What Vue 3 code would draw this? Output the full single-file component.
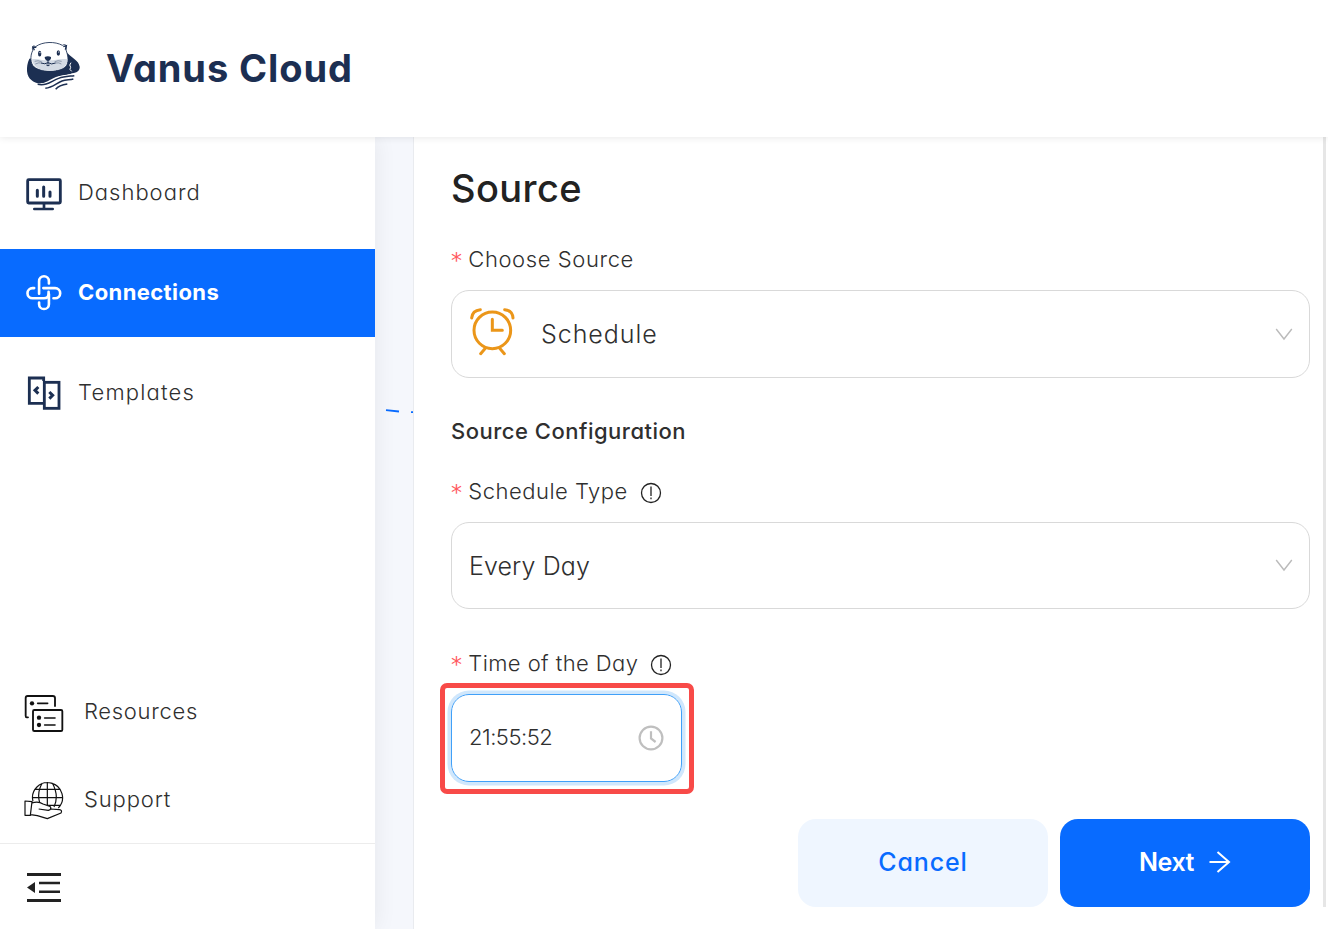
<script setup>
const mainItems = [
  { key: 'dashboard', label: 'Dashboard' },
  { key: 'connections', label: 'Connections', active: true },
  { key: 'templates', label: 'Templates' },
]
</script>

<template>
  <div class="app">
    <header class="header">
      <svg class="logo" viewBox="0 0 270 210">
        <path d="M58 86C46 112 50 140 64 150C82 168 112 160 140 143C158 134 172 136 186 130C203 128 210 120 209 110C206 92 186 84 173 70Z" fill="#1c2f52" />
        <path d="M68 62C66 50 68 45 77 50C98 34 136 34 157 46C168 40 171 48 168 60C174 76 177 92 170 106C158 128 84 130 68 106C60 92 62 74 68 62Z" fill="#fff" stroke="#1c2f52" stroke-width="2.6" />
        <path d="M66 88C84 84 94 92 114 91C136 92 150 84 172 88C174 112 152 122 118 123C84 122 68 108 66 88Z" fill="#d3dae4" />
        <path d="M73 61L69 51L79 52M160 50L169 47L166 59" fill="none" stroke="#1c2f52" stroke-width="4" />
        <ellipse cx="89" cy="71" rx="5" ry="8.5" fill="#1c2f52" /><ellipse cx="145" cy="69" rx="5" ry="8.5" fill="#1c2f52" />
        <circle cx="90" cy="68" r="1.8" fill="#fff" /><circle cx="146" cy="66" r="1.8" fill="#fff" />
        <path d="M104 81Q114 76 123 81Q124 90 114 93Q104 90 104 81Z" fill="#1c2f52" />
        <path d="M114 91V104M93 99Q105 104 114 98Q124 105 137 99M109 105Q114 110 119 105" fill="none" stroke="#1c2f52" stroke-width="3" />
        <path d="M74 94Q84 90 95 95M76 102Q86 97 94 99M134 95Q144 90 155 94M137 99Q147 97 154 102" fill="none" stroke="#1c2f52" stroke-opacity=".6" stroke-width="2" />
        <path d="M183 98Q176 105 182 112Q176 118 185 124" fill="none" stroke="#fff" stroke-width="3" />
        <path d="M66 159C106 172 120 140 160 136C178 134 190 132 196 133C166 138 152 162 122 169C100 174 78 168 66 159Z" fill="#fff" />
        <path d="M83 163C112 168 124 153 146 145C162 139 178 139 193 137M106 175C128 173 138 160 156 153C168 149 180 150 190 147M137 178C145 168 158 164 172 162" fill="none" stroke="#1c2f52" stroke-width="4.5" />
      </svg>
      <span class="brand">Vanus Cloud</span>
    </header>

    <div class="body">
      <aside class="sidebar">
        <nav class="menu">
          <a v-for="item in mainItems" :key="item.key" class="item" :class="[item.key, { active: item.active }]">
            <svg v-if="item.key === 'dashboard'" class="icon" viewBox="0 -5 108 108" fill="none" stroke="#1c2f52" stroke-linecap="round" stroke-linejoin="round">
              <rect x="5" y="9" width="98" height="70" rx="3" stroke-width="8.5" />
              <path d="M54 81v15" stroke-width="8" /><path d="M25 97h55" stroke-width="8" />
              <path d="M34 41v18M53 31v28M72 46v13" stroke-width="9" />
            </svg>
            <svg v-else-if="item.key === 'connections'" class="icon" viewBox="-1 -1 110 110" fill="none" stroke="#fff" stroke-width="8" stroke-linecap="round" stroke-linejoin="round">
              <path d="M24 39H19a15 15 0 0 0 0 31H54Q68 70 68 57V50" />
              <path d="M39 56V18a15 15 0 0 1 30 0V25" />
              <path d="M52 39H88a15 15 0 0 1 0 31H83" />
              <path d="M39 83V88a15 15 0 0 0 30 0V57" />
            </svg>
            <svg v-else class="icon" viewBox="-1 -1 108 108" fill="none" stroke="#1c2f52" stroke-width="8.5">
              <path d="M52 17V8H9V84H52" /><rect x="54" y="21" width="44" height="78" />
              <path d="M36 35L26 45L36 55M69 50L79 60L69 70" stroke-width="9" />
            </svg>
            <span class="item-text">{{ item.label }}</span>
          </a>
        </nav>
        <nav class="secondary">
          <a class="sub resources">
            <svg class="sub-icon" viewBox="0 0 120 120" fill="none" stroke="#111" stroke-width="5.5" stroke-linecap="round" stroke-linejoin="round">
              <path d="M12 70H8Q5 70 5 65V12Q5 6 11 6H86Q93 6 93 12V36" />
              <rect x="27" y="48" width="88" height="63" rx="4" />
              <path d="M41 28H71M62 72H93M62 93H93" stroke-width="5" />
              <g fill="#111" stroke="none"><circle cx="24" cy="28" r="6.5" /><circle cx="45" cy="71" r="6.5" /><circle cx="45" cy="93" r="6.5" /></g>
            </svg>
            <span class="sub-text">Resources</span>
          </a>
          <a class="sub support">
            <svg class="sub-icon" viewBox="0 0 120 120" fill="none" stroke="#111" stroke-width="3.6" stroke-linejoin="round">
              <path d="M27 61A45 45 0 1 1 103 81M70 3V72M25 50H115M32 25H108M68 73H108M55 6Q38 34 47 65M85 6Q106 45 90 78" />
              <path d="M3 60L24 62L19 103H3ZM24 66Q43 60 57 69L78 76Q85 84 73 88L44 84M78 84L106 86Q116 87 111 96L70 113L40 104L20 101" fill="#fff" />
            </svg>
            <span class="sub-text">Support</span>
          </a>
        </nav>
        <div class="collapse">
          <svg class="collapse-icon" viewBox="0 0 34 29" fill="#222">
            <path d="M0 0h34v3H0zM12 8.7h21v2.6H12zM12 17.4h21v2.6H12zM0 26h34v3H0zM0 14.5L8 9v11z" />
          </svg>
        </div>
      </aside>

      <section class="canvas">
        <svg class="edge" viewBox="0 0 38 8"><path d="M11 2.2L24 3.5M36 4.1L38 4.2" fill="none" stroke="#086bff" stroke-width="1.8" /></svg>
      </section>

      <main class="drawer">
        <h1 class="title">Source</h1>
        <div class="label"><i>*</i><span class="t-choose">Choose Source</span></div>
        <div class="select first">
          <svg class="clock" viewBox="0 0 144 150" fill="none" stroke="#eb9619" stroke-width="9" stroke-linecap="round">
            <circle cx="70" cy="73" r="55" /><path d="M70 40V73H100M49 127L35 143M92 127L106 143M8 36Q10 13 34 11M107 11Q130 13 132 36" />
          </svg>
          <span class="t-schedule">Schedule</span>
          <svg class="chevron" viewBox="0 0 18 13"><path d="M1.2 1L9 11L16.8 1" /></svg>
        </div>
        <h2 class="subtitle">Source Configuration</h2>
        <div class="label type-label"><i>*</i><span class="t-type">Schedule Type</span>
          <svg class="info" viewBox="0 0 22 22"><circle cx="11" cy="11" r="9.5" /><path d="M11 4.6v9.4M11 15.6v1.6" /></svg>
        </div>
        <div class="select second">
          <span class="t-every">Every Day</span>
          <svg class="chevron" viewBox="0 0 18 13"><path d="M1.2 1L9 11L16.8 1" /></svg>
        </div>
        <div class="label time-label"><i>*</i><span class="t-time">Time of the Day</span>
          <svg class="info" viewBox="0 0 22 22"><circle cx="11" cy="11" r="9.5" /><path d="M11 4.6v9.4M11 15.6v1.6" /></svg>
        </div>
        <div class="time-wrap">
          <div class="time">
            <span class="t-value">21:55:52</span>
            <svg class="time-icon" viewBox="0 0 26 26"><circle cx="13" cy="13" r="11.4" /><path d="M13 6.3V13.5L17.6 17" /></svg>
          </div>
        </div>
        <div class="actions">
          <button class="btn cancel"><span>Cancel</span></button>
          <button class="btn next"><span>Next</span>
            <svg class="arrow" viewBox="0 0 22 22"><path d="M0.5 11H20M8.5 1L20 11L8.5 21" /></svg>
          </button>
        </div>
        <div class="scrollbar"></div>
      </main>
    </div>
  </div>
</template>

<style>
body { margin: 0; background: #fff; overflow: hidden; }
</style>

<style scoped>
.app { width: 1328px; height: 929px; overflow: hidden; background: #fff; color: #2f2f2f; font-family: Inter, "Open Sans", sans-serif; font-feature-settings: "cv11" 1; display: flex; flex-direction: column; white-space: nowrap; }
svg { display: block; flex: none; }
.header { height: 137px; box-sizing: border-box; position: relative; z-index: 3; background: #fff; box-shadow: 0 0 8px rgba(0, 20, 20, .11); display: flex; align-items: flex-start; padding: 30px 0 0 10px; }
.logo { width: 90px; height: 70px; }
.brand { margin: 14px 0 0 6px; line-height: 48px; font-size: 38px; font-weight: 700; color: #1c2f52; letter-spacing: .9px; }
.body { flex: 1; display: flex; min-height: 0; }
.sidebar { width: 375px; position: relative; z-index: 2; background: #fff; box-shadow: 0 0 22px rgba(0, 0, 0, .07); display: flex; flex-direction: column; }
.menu { flex: none; padding-top: 12px; display: flex; flex-direction: column; gap: 12px; height: 400px; box-sizing: border-box; }
.item { height: 88px; display: flex; align-items: center; padding-left: 26px; gap: 16px; font-size: 22px; font-weight: 300; }
.item.active { background: #086bff; color: #fff; font-weight: 700; }
.icon { width: 36px; height: 36px; }
.item-text { padding-bottom: 2px; }
.dashboard .item-text { letter-spacing: 1px; }
.connections .item-text { letter-spacing: .4px; }
.templates .item-text { letter-spacing: 1.2px; }
.secondary { flex: none; box-sizing: border-box; padding-top: 133px; height: 306px; display: flex; flex-direction: column; }
.sub { flex: none; height: 88px; display: flex; align-items: center; padding-left: 24px; gap: 20px; font-size: 22px; font-weight: 300; }
.sub-icon { width: 40px; height: 40px; }
.support .sub-icon { margin-top: -2px; }
.sub-text { padding-bottom: 6px; letter-spacing: .7px; }
.support .sub-text { letter-spacing: .85px; }
.collapse { border-top: 1px solid #ececec; padding: 29px 0 0 27px; }
.collapse-icon { width: 34px; height: 29px; }
.canvas { width: 38px; background: #f5f7fc; padding-top: 270.5px; box-sizing: border-box; }
.edge { width: 38px; height: 8px; }
.drawer { flex: 1; position: relative; border-left: 1px solid #e9ebef; padding: 27px 18px 0 37px; background: #fff; }
.title { margin: 0; height: 48px; line-height: 48px; font-size: 38px; font-weight: 500; color: #222; letter-spacing: .4px; }
.label { height: 30px; line-height: 30px; margin: 32px 0 16px; display: flex; align-items: center; font-size: 22px; font-weight: 300; }
.label i { width: 17.3px; font-style: normal; font-weight: 400; color: #ff5a5f; font-family: "DejaVu Sans", sans-serif; padding-top: 4px; }
.select { height: 88px; box-sizing: border-box; border: 1px solid #d9d9d9; border-radius: 18px; display: flex; align-items: center; padding: 0 16.5px 0 17px; font-size: 25px; font-weight: 300; }
.select.second { height: 87px; }
.clock { width: 48px; height: 50px; margin: -6px 24px 0 0; }
.chevron { width: 18px; height: 13px; margin-left: auto; fill: none; stroke: #bbb; stroke-width: 1.4; }
.subtitle { margin: 38px 0 0; height: 30px; line-height: 30px; font-size: 22px; font-weight: 500; letter-spacing: .5px; }
.type-label { margin-top: 30px; }
.time-label { margin-top: 39px; }
.info { width: 22px; height: 22px; margin: 4px 0 0 12px; fill: none; stroke: #222; stroke-width: 1.3; }
.t-choose { letter-spacing: .6px; }
.t-schedule { letter-spacing: .95px; }
.t-type { letter-spacing: .5px; }
.t-every { letter-spacing: .1px; }
.t-time { letter-spacing: .42px; }
.time-wrap { box-sizing: border-box; width: 254px; height: 111px; margin: -11px 0 0 -11px; border: 5px solid #f84a48; border-radius: 7px; padding: 6px 0 0 6px; }
.time { width: 231px; height: 88px; box-sizing: border-box; border: 1px solid #40a0f8; border-radius: 18px; box-shadow: 0 0 0 3.5px #d0e7fc; display: flex; align-items: center; padding: 0 17.5px 0 17px; font-size: 22px; font-weight: 300; }
.t-value { letter-spacing: -.5px; padding-bottom: 2px; }
.time-icon { width: 26px; height: 26px; margin: -1px 0 0 auto; fill: none; stroke: #bfbfbf; stroke-width: 2.2; }
.actions { margin-top: 25px; display: flex; justify-content: flex-end; gap: 12px; }
.btn { width: 250px; height: 88px; border: 0; border-radius: 18px; display: flex; align-items: center; justify-content: center; font: 500 25px Inter, sans-serif; font-feature-settings: "cv11" 1; padding: 0 0 2px; }
.cancel { background: #eff6ff; color: #086bff; letter-spacing: .9px; }
.next { background: #086bff; color: #fff; font-weight: 600; letter-spacing: -.4px; }
.arrow { width: 22px; height: 22px; margin-left: 15px; fill: none; stroke: #fff; stroke-width: 2; }
.scrollbar { position: absolute; top: 0; right: 2px; width: 3px; height: 770px; background: #e6e6e6; }
</style>
